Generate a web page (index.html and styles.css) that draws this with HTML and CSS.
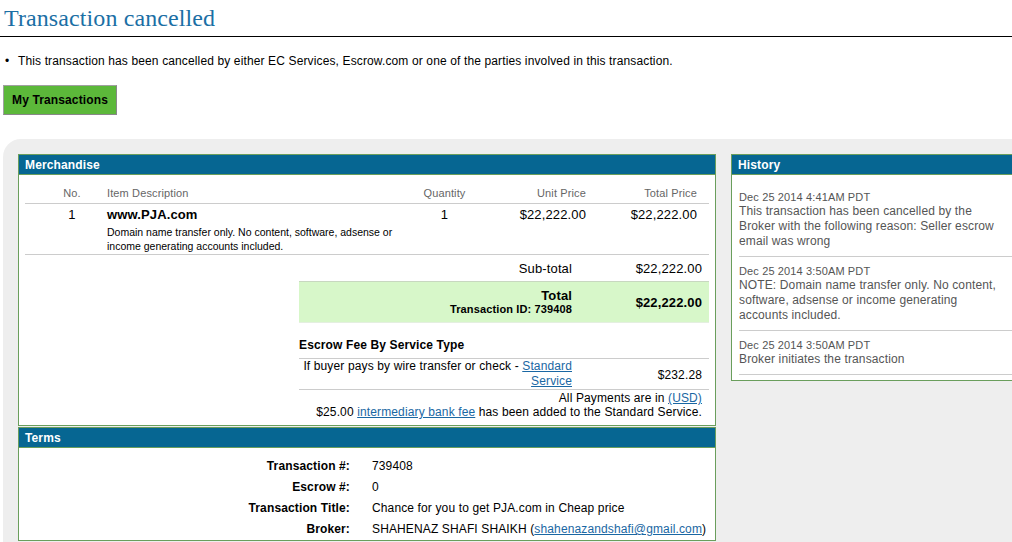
FILE: index.html
```html
<!DOCTYPE html>
<html lang="en">
<head>
    <meta charset="UTF-8">
    <title>Transaction cancelled</title>
    <link rel="stylesheet" href="styles.css">
</head>
<body>

    <h1 class="page-title">Transaction cancelled</h1>

    <ul class="notice">
        <li><span class="bullet">•</span>This transaction has been cancelled by either EC Services, Escrow.com or one of the parties involved in this transaction.</li>
    </ul>

    <a href="#" class="btn-green">My Transactions</a>

    <div class="content">

        <div class="main-col">

            <!-- Merchandise -->
            <div class="panel">
                <div class="panel-head">Merchandise</div>
                <div class="merch">
                    <div class="item-row head-row">
                        <div class="c-no">No.</div>
                        <div class="c-desc">Item Description</div>
                        <div class="c-qty">Quantity</div>
                        <div class="c-unit">Unit Price</div>
                        <div class="c-total">Total Price</div>
                    </div>
                    <div class="item-row body-row">
                        <div class="c-no big">1</div>
                        <div class="c-desc">
                            <div class="item-name">www.PJA.com</div>
                            <div class="item-note">Domain name transfer only. No content, software, adsense or income generating accounts included.</div>
                        </div>
                        <div class="c-qty big">1</div>
                        <div class="c-unit big">$22,222.00</div>
                        <div class="c-total big">$22,222.00</div>
                    </div>

                    <div class="summary">
                        <div class="sum-row subtotal">
                            <div class="sum-label">Sub-total</div>
                            <div class="sum-value">$22,222.00</div>
                        </div>
                        <div class="sum-row total">
                            <div class="sum-label">
                                <div class="total-label">Total</div>
                                <div class="trans-id">Transaction ID: 739408</div>
                            </div>
                            <div class="sum-value">$22,222.00</div>
                        </div>

                        <div class="fee-title">Escrow Fee By Service Type</div>
                        <div class="sum-row fee">
                            <div class="sum-label">If buyer pays by wire transfer or check - <a href="#">Standard<br>Service</a></div>
                            <div class="sum-value">$232.28</div>
                        </div>
                    </div>

                    <div class="pay-note">
                        <div>All Payments are in <a href="#">(USD)</a></div>
                        <div>$25.00 <a href="#">intermediary bank fee</a> has been added to the Standard Service.</div>
                    </div>
                </div>
            </div>

            <!-- Terms -->
            <div class="panel terms-panel">
                <div class="panel-head">Terms</div>
                <div class="terms">
                    <div class="t-label">Transaction #:</div>
                    <div class="t-value">739408</div>
                    <div class="t-label">Escrow #:</div>
                    <div class="t-value">0</div>
                    <div class="t-label">Transaction Title:</div>
                    <div class="t-value">Chance for you to get PJA.com in Cheap price</div>
                    <div class="t-label">Broker:</div>
                    <div class="t-value">SHAHENAZ SHAFI SHAIKH (<a href="#">shahenazandshafi@gmail.com</a>)</div>
                </div>
            </div>

        </div>

        <div class="side-col">
            <div class="panel">
                <div class="panel-head">History</div>
                <div class="history">
                    <div class="h-item">
                        <div class="h-date">Dec 25 2014 4:41AM PDT</div>
                        <div class="h-text">This transaction has been cancelled by the Broker with the following reason: Seller escrow email was wrong</div>
                    </div>
                    <div class="h-item">
                        <div class="h-date">Dec 25 2014 3:50AM PDT</div>
                        <div class="h-text">NOTE: Domain name transfer only. No content, software, adsense or income generating accounts included.</div>
                    </div>
                    <div class="h-item">
                        <div class="h-date">Dec 25 2014 3:50AM PDT</div>
                        <div class="h-text">Broker initiates the transaction</div>
                    </div>
                </div>
            </div>
        </div>

    </div>

</body>
</html>
```

FILE: styles.css
```css
body {
    font-family: "Liberation Sans", Arial, sans-serif;
    font-size: 12px;
    letter-spacing: 0.13px;
    margin: 0;
    padding: 0;
    background-color: #fff;
    color: #000;
    overflow: hidden;
}

a {
    color: #1a67a3;
    text-decoration: underline;
}

.page-title {
    font-family: "Liberation Serif", Georgia, serif;
    font-weight: normal;
    font-size: 24px;
    line-height: 28px;
    letter-spacing: 0.1px;
    color: #1b6fa5;
    margin: 0;
    padding: 4px 4px 4px 4px;
    border-bottom: 1px solid #000;
}

.notice {
    list-style: none;
    margin: 17px 0 0 0;
    padding: 0 0 0 5px;
    line-height: 14px;
}

.bullet {
    display: inline-block;
    width: 13px;
}

.btn-green {
    display: inline-block;
    margin: 17px 0 0 3px;
    width: 112px;
    height: 28px;
    line-height: 28px;
    text-align: center;
    background-color: #5cb83a;
    border: 1px solid #a0a0a0;
    border-right-color: #888;
    border-bottom-color: #888;
    color: #000;
    font-weight: bold;
    text-decoration: none;
}

.content {
    display: flex;
    gap: 15px;
    margin: 24px 0 0 3px;
    padding: 15px 0 20px 15px;
    background-color: #eeeeee;
    border-top-left-radius: 18px;
}

.main-col {
    width: 698px;
    flex-shrink: 0;
}

.side-col {
    width: 300px;
    flex-shrink: 0;
}

.panel {
    background-color: #fff;
    border: 1px solid #6a9e5c;
}

.terms-panel {
    margin-top: 1px;
}

.panel-head {
    background-color: #066692;
    color: #fff;
    font-weight: bold;
    height: 19px;
    line-height: 20px;
    padding: 0 6px;
    border-bottom: 1px solid #6a9e5c;
}

/* merchandise table */
.merch {
    padding: 0 6px 6px 6px;
}

.item-row {
    display: flex;
    border-bottom: 1px solid #cccccc;
}

.head-row {
    color: #666;
    font-size: 11px;
    line-height: 14px;
    padding: 11px 0 3px 0;
}

.body-row {
    padding: 3px 0 1px 0;
}

.c-no {
    width: 70px;
    padding-left: 12px;
    text-align: center;
}

.c-desc {
    width: 292px;
}

.c-qty {
    width: 91px;
    text-align: center;
}

.c-unit {
    width: 96px;
    text-align: right;
}

.c-total {
    width: 111px;
    text-align: right;
}

.big {
    font-size: 13px;
    line-height: 16px;
}

.item-name {
    font-size: 13px;
    font-weight: bold;
    line-height: 16px;
}

.item-note {
    font-size: 10.5px;
    letter-spacing: 0;
    line-height: 14px;
    margin-top: 2px;
}

.summary {
    margin-left: 274px;
    width: 410px;
}

.sum-row {
    display: flex;
    align-items: center;
}

.sum-label {
    width: 273px;
    text-align: right;
}

.sum-value {
    flex: 1;
    text-align: right;
    padding-right: 7px;
}

.subtotal {
    height: 26px;
    font-size: 13px;
}

.total {
    background-color: #d7f7c9;
    border-top: 1px solid #c8d8c0;
    border-bottom: 1px solid #e4efe0;
    padding: 7px 0 6px 0;
}

.total .sum-value {
    font-weight: bold;
    font-size: 13px;
}

.total-label {
    font-weight: bold;
    font-size: 13px;
    line-height: 14px;
}

.trans-id {
    font-weight: bold;
    font-size: 11px;
    line-height: 13px;
}

.fee-title {
    font-weight: bold;
    line-height: 14px;
    margin-top: 15px;
    padding-bottom: 6px;
    border-bottom: 1px solid #cccccc;
}

.fee {
    line-height: 15px;
    border-bottom: 1px solid #cccccc;
}

.fee .sum-value {
    padding-top: 2px;
}

.pay-note {
    text-align: right;
    padding: 1px 7px 0 0;
    line-height: 14px;
}

/* terms */
.terms {
    display: grid;
    grid-template-columns: 331px 1fr;
    column-gap: 22px;
    padding-top: 8px;
    line-height: 21px;
}

.t-label {
    text-align: right;
    font-weight: bold;
}

/* history */
.history {
    padding: 8px 0 5px 0;
}

.h-item {
    margin: 0 7px;
    padding: 7px 0 7px 0;
    border-bottom: 1px solid #cccccc;
}

.h-date {
    font-size: 11px;
    line-height: 14px;
    color: #555;
}

.h-text {
    line-height: 15px;
    color: #555;
    width: 262px;
}
```
